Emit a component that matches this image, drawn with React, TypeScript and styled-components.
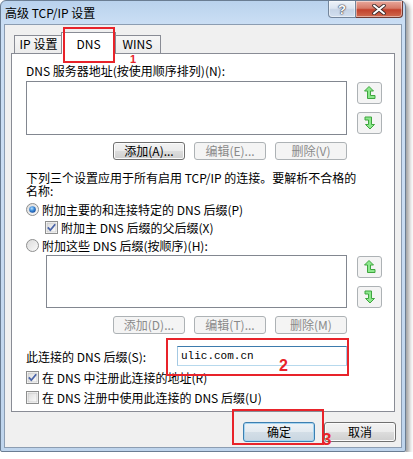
import styled, { createGlobalStyle } from 'styled-components'

const FONT = `"Noto Sans CJK SC", "Liberation Sans", sans-serif`

const GlobalStyle = createGlobalStyle`
	* { box-sizing: border-box; }
	body { margin: 0; background: #fff; }
`

const Window = styled.div`
	position: relative;
	width: 406px;
	height: 452px;
	display: flex;
	flex-direction: column;
	border: 1px solid #6a7d93;
	border-radius: 6px 6px 2px 2px;
	background: linear-gradient(180deg, #b9d2ed 0px, #cadef4 22px, #c9dcf2 200px, #bed4ec 100%);
	box-shadow: 3px 3px 5px rgba(0, 0, 0, 0.4);
	font-family: ${FONT};
	font-size: 12px;
	color: #000;
`

const TitleBar = styled.div`
	height: 23px;
	display: flex;
	align-items: flex-start;
`

const Title = styled.div`
	padding-left: 4px;
	line-height: 23px;
	font-size: 12px;
	color: #000;
`

const Controls = styled.div`
	margin-left: auto;
	margin-right: 2px;
	display: flex;
`

const CaptionButton = styled.div<{ $close?: boolean }>`
	width: ${(p) => (p.$close ? 47 : 28)}px;
	height: 17px;
	display: flex;
	align-items: center;
	justify-content: center;
	border: 1px solid ${(p) => (p.$close ? '#6e3a33' : '#73859b')};
	border-top: none;
	border-left: ${(p) => (p.$close ? 'none' : '1px solid #73859b')};
	border-radius: ${(p) => (p.$close ? '0 0 4px 0' : '0 0 0 4px')};
	background: ${(p) =>
		p.$close
			? 'linear-gradient(180deg, #e8a89c 0%, #d67a68 45%, #c2412c 55%, #cf6a4e 100%)'
			: 'linear-gradient(180deg, #eef3f9 0%, #dbe5f1 45%, #c6d4e6 55%, #d3e0ef 100%)'};
	box-shadow: inset 0 0 0 1px rgba(255, 255, 255, 0.45);
	font-family: "Liberation Sans", sans-serif;
	font-weight: bold;
	font-size: 13px;
	color: #fff;
	text-shadow: 0 0 1px #334, 0 0 1px #334, 0 0 2px #556;
`

const Client = styled.div`
	flex: 1;
	margin: 0 3px 3px 3px;
	border: 1px solid #8c9db2;
	background: #f0f0f0;
	display: flex;
	flex-direction: column;
`

const TabStrip = styled.div`
	margin-top: 7px;
	height: 21px;
	padding-left: 9px;
	display: flex;
	align-items: flex-end;
`

const Tab = styled.div<{ $w: number; $active?: boolean }>`
	position: relative;
	width: ${(p) => p.$w + (p.$active ? 4 : 0)}px;
	height: ${(p) => (p.$active ? 22 : 18)}px;
	margin: ${(p) => (p.$active ? '0 -2px -1px -2px' : '0')};
	z-index: ${(p) => (p.$active ? 2 : 0)};
	padding-top: ${(p) => (p.$active ? 3 : 0)}px;
	border: 1px solid #898c95;
	border-bottom: none;
	background: ${(p) => (p.$active ? '#fff' : 'linear-gradient(180deg, #f6f6f6 0%, #ececec 100%)')};
	line-height: 16px;
	text-align: center;
	white-space: nowrap;
`

const Panel = styled.div`
	position: relative;
	z-index: 1;
	height: 359px;
	margin: 0 6px;
	border: 1px solid #898c95;
	background: #fff;
	padding: 10px 12px 0 14px;
	display: flex;
	flex-direction: column;
`

const Label = styled.div`
	line-height: 13px;
	white-space: nowrap;
`

const ListRow = styled.div<{ $mt: number; $indent?: number }>`
	margin-top: ${(p) => p.$mt}px;
	margin-left: ${(p) => p.$indent || 0}px;
	display: flex;
	gap: 10px;
`

const ListBox = styled.div<{ $w: number; $h: number }>`
	width: ${(p) => p.$w}px;
	height: ${(p) => p.$h}px;
	border: 1px solid #828790;
	background: #fff;
`

const ArrowCol = styled.div`
	padding-top: 1px;
	display: flex;
	flex-direction: column;
	gap: 8px;
`

const ArrowButton = styled.div`
	width: 25px;
	height: 22px;
	border: 1px solid #adb2b5;
	border-radius: 3px;
	background: #f4f4f4;
	display: flex;
	align-items: center;
	justify-content: center;
`

const ButtonRow = styled.div<{ $mt: number }>`
	margin-top: ${(p) => p.$mt}px;
	width: 321px;
	display: flex;
	justify-content: flex-end;
	gap: 9px;
`

type Kind = 'normal' | 'disabled' | 'default'

const Button = styled.div<{ $kind: Kind; $h: number }>`
	width: 72px;
	height: ${(p) => p.$h}px;
	display: flex;
	align-items: center;
	justify-content: center;
	border-radius: 3px;
	white-space: nowrap;
	line-height: 14px;
	border: 1px solid
		${(p) => (p.$kind === 'disabled' ? '#adb2b5' : p.$kind === 'default' ? '#3c7fb1' : '#707070')};
	color: ${(p) => (p.$kind === 'disabled' ? '#8a8a8a' : '#000')};
	background: ${(p) =>
		p.$kind === 'disabled'
			? '#f4f4f4'
			: p.$kind === 'default'
				? 'linear-gradient(180deg, #eef3f7 0%, #e3eaf0 50%, #d3dee7 50%, #c9d6e1 100%)'
				: 'linear-gradient(180deg, #f2f2f2 0%, #ebebeb 50%, #dddddd 50%, #cfcfcf 100%)'};
	box-shadow: ${(p) =>
		p.$kind === 'disabled'
			? 'none'
			: p.$kind === 'default'
				? 'inset 0 0 0 1px #a6d4f0'
				: 'inset 0 0 0 1px #fbfbfb'};
`

const Paragraph = styled.div`
	margin-top: 11px;
	line-height: 13px;
	white-space: nowrap;
`

const OptionRow = styled.div<{ $mt: number; $indent?: number }>`
	margin-top: ${(p) => p.$mt}px;
	margin-left: ${(p) => p.$indent || 0}px;
	height: 18px;
	display: flex;
	align-items: center;
	gap: 3px;
	white-space: nowrap;
`

const InputRow = styled.div`
	margin-top: 12px;
	height: 20px;
	display: flex;
	align-items: center;
`

const InputLabel = styled.div`
	width: 151px;
	white-space: nowrap;
`

const TextBox = styled.div`
	width: 170px;
	height: 20px;
	border: 1px solid;
	border-color: #3d7bad #a4c9e3 #b7d9ed #a4c9e3;
	background: #fff;
	padding-left: 3px;
	display: flex;
	align-items: center;
	font-family: "Liberation Mono", monospace;
	font-size: 11px;
`

const Footer = styled.div`
	margin-top: 10px;
	padding-right: 5px;
	display: flex;
	justify-content: flex-end;
	gap: 9px;
`

const Mark = styled.div<{ $x: number; $y: number; $w: number; $h: number }>`
	position: absolute;
	left: ${(p) => p.$x}px;
	top: ${(p) => p.$y}px;
	width: ${(p) => p.$w}px;
	height: ${(p) => p.$h}px;
	border: 2px solid #e8232a;
	z-index: 5;
	pointer-events: none;
`

const Num = styled.div<{ $x: number; $y: number; $size: number }>`
	position: absolute;
	left: ${(p) => p.$x}px;
	top: ${(p) => p.$y}px;
	z-index: 6;
	font-family: "Liberation Sans", sans-serif;
	font-weight: bold;
	font-size: ${(p) => p.$size}px;
	line-height: 1;
	color: #e8232a;
`

const UpIcon = () => (
	<svg width="12" height="14" viewBox="0 0 12 14">
		<polygon
			points="5,0.5 9.5,5 6.5,5 6.5,9.5 11,9.5 11,12.5 3.5,12.5 3.5,5 0.5,5"
			fill="#8ce88c"
			stroke="#3fa53f"
			strokeWidth="1"
			strokeLinejoin="round"
		/>
	</svg>
)

const DownIcon = () => (
	<svg width="12" height="14" viewBox="0 0 12 14">
		<polygon
			points="1,1 7.5,1 7.5,8.5 10.5,8.5 6,13 1.5,8.5 4.5,8.5 4.5,4 1,4"
			fill="#8ce88c"
			stroke="#3fa53f"
			strokeWidth="1"
			strokeLinejoin="round"
		/>
	</svg>
)

const Radio = ({ checked }: { checked?: boolean }) => (
	<svg width="13" height="13" viewBox="0 0 13 13">
		<defs>
			<linearGradient id="rb" x1="0" y1="0" x2="1" y2="1">
				<stop offset="0" stopColor="#d9d9d9" />
				<stop offset="1" stopColor="#fbfbfb" />
			</linearGradient>
			<radialGradient id="rd" cx="0.4" cy="0.35" r="0.7">
				<stop offset="0" stopColor="#b6e1ff" />
				<stop offset="0.5" stopColor="#3c8ad8" />
				<stop offset="1" stopColor="#13489b" />
			</radialGradient>
		</defs>
		<circle cx="6.5" cy="6.5" r="6" fill="url(#rb)" stroke="#8e8f8f" />
		{checked && <circle cx="6.5" cy="6.5" r="3.3" fill="url(#rd)" />}
	</svg>
)

const Check = ({ checked }: { checked?: boolean }) => (
	<svg width="13" height="13" viewBox="0 0 13 13">
		<defs>
			<linearGradient id="cb" x1="0" y1="0" x2="1" y2="1">
				<stop offset="0" stopColor="#dcdcdc" />
				<stop offset="1" stopColor="#fbfbfb" />
			</linearGradient>
		</defs>
		<rect x="0.5" y="0.5" width="12" height="12" fill="#fff" stroke="#8e8f8f" />
		<rect x="2" y="2" width="9" height="9" fill="url(#cb)" stroke="#b8b8b8" strokeWidth="0.6" />
		{checked && (
			<path d="M2.8 6.4 L5.3 9.2 L10.2 3.2" fill="none" stroke="#4a64a8" strokeWidth="1.8" />
		)}
	</svg>
)

export default function App() {
	return (
		<>
			<GlobalStyle />
			<Window>
				<TitleBar>
					<Title>高级 TCP/IP 设置</Title>
					<Controls>
						<CaptionButton>?</CaptionButton>
						<CaptionButton $close>
							<svg width="14" height="11" viewBox="0 0 14 11">
								<path
									d="M2 1.5 L12 9.5 M12 1.5 L2 9.5"
									stroke="#3a2a2a"
									strokeWidth="3.6"
									strokeLinecap="round"
								/>
								<path
									d="M2 1.5 L12 9.5 M12 1.5 L2 9.5"
									stroke="#fff"
									strokeWidth="2"
									strokeLinecap="round"
								/>
							</svg>
						</CaptionButton>
					</Controls>
				</TitleBar>

				<Client>
					<TabStrip>
						<Tab $w={49}>IP 设置</Tab>
						<Tab $w={51} $active>
							DNS
						</Tab>
						<Tab $w={47}>WINS</Tab>
					</TabStrip>

					<Panel>
						<Label>DNS 服务器地址(按使用顺序排列)(N):</Label>
						<ListRow $mt={4}>
							<ListBox $w={321} $h={54} />
							<ArrowCol>
								<ArrowButton>
									<UpIcon />
								</ArrowButton>
								<ArrowButton>
									<DownIcon />
								</ArrowButton>
							</ArrowCol>
						</ListRow>
						<ButtonRow $mt={7}>
							<Button $kind="normal" $h={18}>
								添加(A)...
							</Button>
							<Button $kind="disabled" $h={18}>
								编辑(E)...
							</Button>
							<Button $kind="disabled" $h={18}>
								删除(V)
							</Button>
						</ButtonRow>

						<Paragraph>
							下列三个设置应用于所有启用 TCP/IP 的连接。要解析不合格的
							<br />
							名称:
						</Paragraph>

						<OptionRow $mt={3}>
							<Radio checked />
							附加主要的和连接特定的 DNS 后缀(P)
						</OptionRow>
						<OptionRow $mt={0} $indent={19}>
							<Check checked />
							附加主 DNS 后缀的父后缀(X)
						</OptionRow>
						<OptionRow $mt={0}>
							<Radio />
							附加这些 DNS 后缀(按顺序)(H):
						</OptionRow>

						<ListRow $mt={1} $indent={20}>
							<ListBox $w={301} $h={53} />
							<ArrowCol>
								<ArrowButton>
									<UpIcon />
								</ArrowButton>
								<ArrowButton>
									<DownIcon />
								</ArrowButton>
							</ArrowCol>
						</ListRow>
						<ButtonRow $mt={8}>
							<Button $kind="disabled" $h={18}>
								添加(D)...
							</Button>
							<Button $kind="disabled" $h={18}>
								编辑(T)...
							</Button>
							<Button $kind="disabled" $h={18}>
								删除(M)
							</Button>
						</ButtonRow>

						<InputRow>
							<InputLabel>此连接的 DNS 后缀(S):</InputLabel>
							<TextBox>ulic.com.cn</TextBox>
						</InputRow>

						<OptionRow $mt={2}>
							<Check checked />
							在 DNS 中注册此连接的地址(R)
						</OptionRow>
						<OptionRow $mt={2}>
							<Check />
							在 DNS 注册中使用此连接的 DNS 后缀(U)
						</OptionRow>
					</Panel>

					<Footer>
						<Button $kind="default" $h={20}>
							确定
						</Button>
						<Button $kind="normal" $h={20}>
							取消
						</Button>
					</Footer>
				</Client>

				<Mark $x={62} $y={26} $w={52} $h={36} />
				<Num $x={129} $y={53} $size={11}>
					1
				</Num>
				<Mark $x={165} $y={337} $w={183} $h={38} />
				<Num $x={278} $y={357} $size={16}>
					2
				</Num>
				<Mark $x={231} $y={408} $w={92} $h={36} />
				<Num $x={321} $y={430} $size={17}>
					3
				</Num>
			</Window>
		</>
	)
}
